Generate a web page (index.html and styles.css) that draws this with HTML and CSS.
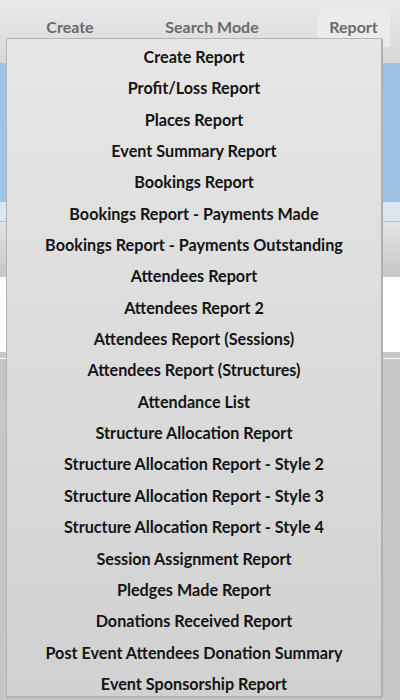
FILE: index.html
```html
<!DOCTYPE html>
<html lang="en">
<head>
  <meta charset="UTF-8">
  <meta name="viewport" content="width=device-width, initial-scale=1.0">
  <title>Report</title>
  <link rel="stylesheet" href="styles.css">
</head>
<body>

  <div class="topbar">
    <span class="tab">Create</span>
    <span class="tab">Search Mode</span>
    <span class="tab active">Report</span>
  </div>
  <div class="banner"></div>
  <div class="subbar"></div>
  <div class="toolbar"></div>
  <div class="band"></div>
  <div class="content"></div>
  <div class="footer"></div>

  <ul class="menu">
    <li>Create Report</li>
    <li>Profit/Loss Report</li>
    <li>Places Report</li>
    <li>Event Summary Report</li>
    <li>Bookings Report</li>
    <li>Bookings Report - Payments Made</li>
    <li>Bookings Report - Payments Outstanding</li>
    <li>Attendees Report</li>
    <li>Attendees Report 2</li>
    <li>Attendees Report (Sessions)</li>
    <li>Attendees Report (Structures)</li>
    <li>Attendance List</li>
    <li>Structure Allocation Report</li>
    <li>Structure Allocation Report - Style 2</li>
    <li>Structure Allocation Report - Style 3</li>
    <li>Structure Allocation Report - Style 4</li>
    <li>Session Assignment Report</li>
    <li>Pledges Made Report</li>
    <li>Donations Received Report</li>
    <li>Post Event Attendees Donation Summary</li>
    <li>Event Sponsorship Report</li>
  </ul>

</body>
</html>
```

FILE: styles.css
```css
* {
  margin: 0;
  padding: 0;
  box-sizing: border-box;
}

body {
  font-family: Lato, "Open Sans", sans-serif;
  font-weight: 700;
  background-color: #c6c6c6;
  height: 700px;
  overflow: hidden;
}

.topbar {
  height: 63px;
  background: linear-gradient(#eaeaea, #d7d7d7);
  display: flex;
  align-items: flex-start;
  padding-top: 9px;
}

.tab {
  font-size: 16px;
  color: #6a6a6a;
  height: 38px;
  line-height: 36px;
  text-align: center;
}

.tab:nth-child(1) {
  width: 140px;
}

.tab:nth-child(2) {
  width: 144px;
}

.tab.active {
  margin-left: 33px;
  width: 73px;
  background-color: #ebebeb;
  border-radius: 9px 9px 0 0;
}

.banner {
  height: 139px;
  background-color: #9dc3e7;
}

.subbar {
  height: 20px;
  background-color: #dde6f0;
  border-bottom: 1px solid #bcbcbc;
}

.toolbar {
  height: 43px;
  background: linear-gradient(#e3e3e3, #cdcdcd);
}

.band {
  height: 12px;
  background-color: #c8c8c8;
}

.content {
  height: 75px;
  background-color: #fff;
}

.footer {
  height: 7px;
  background-color: #c8c8c8;
  border-bottom: 1px solid #fff;
}

ul, li {
  list-style: none;
}

.menu {
  position: absolute;
  left: 6px;
  top: 38px;
  width: 377px;
  height: 660px;
  padding-top: 2px;
  background: linear-gradient(#e6e6e6, #d1d1d1);
  border: 1px solid #b4b4b4;
  border-right: 2px solid #b0b0b0;
  border-bottom: 2px solid #b0b0b0;
  border-radius: 2px;
}

.menu li {
  height: 31.35px;
  line-height: 31px;
  text-align: center;
  font-size: 16.2px;
  color: #141414;
  white-space: nowrap;
}
```
